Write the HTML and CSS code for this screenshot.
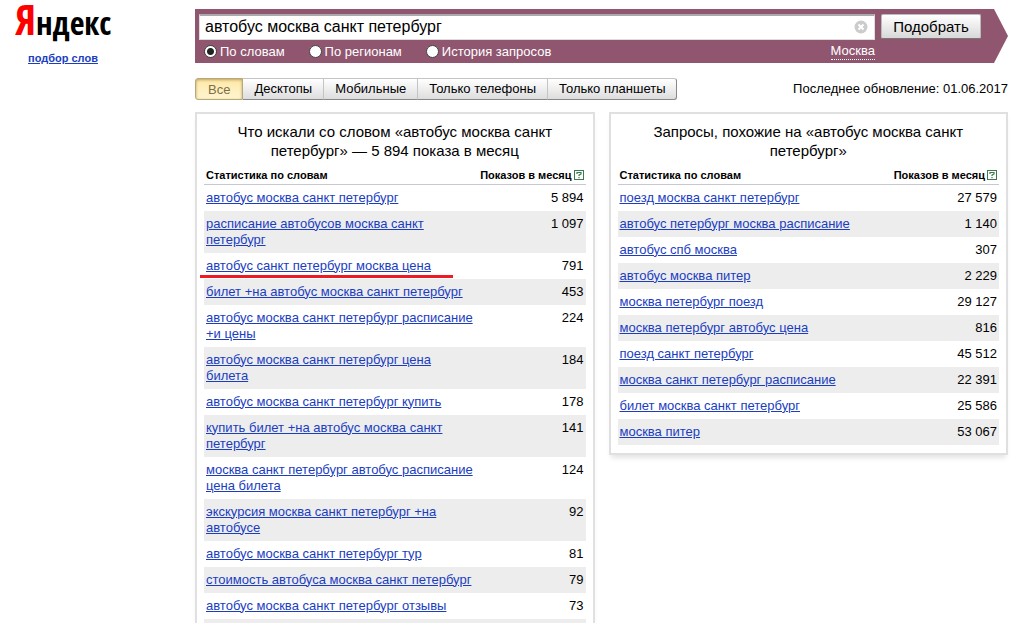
FILE: index.html
```html
<!DOCTYPE html>
<html lang="ru">
<head>
<meta charset="utf-8">
<title>Подбор слов</title>
<link rel="stylesheet" href="styles.css">
</head>
<body>
<div class="page">
  <aside class="brand">
    <div class="logo"><span class="logo-first">Я</span>ндекс</div>
    <a class="service" href="#">подбор слов</a>
  </aside>
  <main class="main">
    <form class="search">
      <div class="search-field">
        <div class="input-wrap">
          <input class="query" type="text" aria-label="Запрос" value="автобус москва санкт петербург">
          <button class="clear" type="button" aria-label="Очистить"><svg width="14" height="14" viewBox="0 0 14 14"><circle cx="7" cy="7" r="6.5" fill="#ccc"/><path d="M4.5 4.5l5 5M9.500 4.500l-5 5" stroke="#fff" stroke-width="2"/></svg></button>
        </div>
        <div class="options">
          <label class="option"><input type="radio" name="mode" checked>По словам</label>
          <label class="option"><input type="radio" name="mode">По регионам</label>
          <label class="option"><input type="radio" name="mode">История запросов</label>
          <a class="region" href="#">Москва</a>
        </div>
      </div>
      <button class="submit" type="button">Подобрать</button>
    </form>
    <div class="toolbar">
      <div class="tabs">
        <button class="tab tab-active" type="button">Все</button>
        <button class="tab" type="button">Десктопы</button>
        <button class="tab" type="button">Мобильные</button>
        <button class="tab" type="button">Только телефоны</button>
        <button class="tab" type="button">Только планшеты</button>
      </div>
      <span>Последнее обновление: 01.06.2017</span>
    </div>
    <div class="panels">
      <section class="panel">
        <h2 class="title">Что искали со словом «автобус москва санкт петербург» — 5 894 показа в месяц</h2>
        <table class="stats">
          <thead><tr><th class="words">Статистика по словам</th><th class="count">Показов в месяц<svg class="help" width="10" height="10" viewBox="0 0 10 10"><rect x=".5" y=".5" width="9" height="9" fill="#fff" stroke="#3a7a4c"/><path d="M3 4V2.500h4V4L5 5.200V6M5 7v1.200" fill="none" stroke="#3a7a4c" stroke-width="1.200"/></svg></th></tr></thead>
          <tbody>
            <tr><td><a href="#">автобус москва санкт петербург</a></td><td class="count">5 894</td></tr>
            <tr><td><a href="#">расписание автобусов москва санкт петербург</a></td><td class="count">1 097</td></tr>
            <tr><td class="marked"><a href="#">автобус санкт петербург москва цена</a></td><td class="count">791</td></tr>
            <tr><td><a href="#">билет +на автобус москва санкт петербург</a></td><td class="count">453</td></tr>
            <tr><td><a href="#">автобус москва санкт петербург расписание +и цены</a></td><td class="count">224</td></tr>
            <tr><td><a href="#">автобус москва санкт петербург цена билета</a></td><td class="count">184</td></tr>
            <tr><td><a href="#">автобус москва санкт петербург купить</a></td><td class="count">178</td></tr>
            <tr><td><a href="#">купить билет +на автобус москва санкт петербург</a></td><td class="count">141</td></tr>
            <tr><td><a href="#">москва санкт петербург автобус расписание цена билета</a></td><td class="count">124</td></tr>
            <tr><td><a href="#">экскурсия москва санкт петербург +на автобусе</a></td><td class="count">92</td></tr>
            <tr><td><a href="#">автобус москва санкт петербург тур</a></td><td class="count">81</td></tr>
            <tr><td><a href="#">стоимость автобуса москва санкт петербург</a></td><td class="count">79</td></tr>
            <tr><td><a href="#">автобус москва санкт петербург отзывы</a></td><td class="count">73</td></tr>
            <tr class="next"><td></td><td></td></tr>
          </tbody>
        </table>
      </section>
      <section class="panel">
        <h2 class="title">Запросы, похожие на «автобус москва санкт петербург»</h2>
        <table class="stats">
          <thead><tr><th class="words">Статистика по словам</th><th class="count">Показов в месяц<svg class="help" width="10" height="10" viewBox="0 0 10 10"><rect x=".5" y=".5" width="9" height="9" fill="#fff" stroke="#3a7a4c"/><path d="M3 4V2.500h4V4L5 5.200V6M5 7v1.200" fill="none" stroke="#3a7a4c" stroke-width="1.200"/></svg></th></tr></thead>
          <tbody>
            <tr><td><a href="#">поезд москва санкт петербург</a></td><td class="count">27 579</td></tr>
            <tr><td><a href="#">автобус петербург москва расписание</a></td><td class="count">1 140</td></tr>
            <tr><td><a href="#">автобус спб москва</a></td><td class="count">307</td></tr>
            <tr><td><a href="#">автобус москва питер</a></td><td class="count">2 229</td></tr>
            <tr><td><a href="#">москва петербург поезд</a></td><td class="count">29 127</td></tr>
            <tr><td><a href="#">москва петербург автобус цена</a></td><td class="count">816</td></tr>
            <tr><td><a href="#">поезд санкт петербург</a></td><td class="count">45 512</td></tr>
            <tr><td><a href="#">москва санкт петербург расписание</a></td><td class="count">22 391</td></tr>
            <tr><td><a href="#">билет москва санкт петербург</a></td><td class="count">25 586</td></tr>
            <tr><td><a href="#">москва питер</a></td><td class="count">53 067</td></tr>
          </tbody>
        </table>
      </section>
    </div>
  </main>
</div>
</body>
</html>
```
FILE: styles.css
```css
* { box-sizing: border-box; }
body {
  margin: 0;
  height: 100vh;
  overflow: hidden;
  background: #fff;
  color: #000;
  font: 13px/16px "Liberation Sans", Arial, sans-serif;
}
button, input { font-family: inherit; color: inherit; margin: 0; }
a { color: #1a3dc1; text-underline-offset: 1px; }

.page { display: grid; grid-template-columns: 195px 1fr; padding-right: 7px; }

.logo { padding-left: 15px; height: 48px; font: 32px/38px "Open Sans Condensed", "Liberation Sans Narrow", sans-serif; }
.logo-first { color: #f00; font-size: 42px; }
.service { display: inline-block; margin-left: 28px; font-size: 11px; line-height: 20px; font-weight: bold; }

.main { padding-top: 9px; }
.search {
  display: flex;
  align-items: flex-start;
  gap: 6px;
  height: 54px;
  padding: 5px 27px 0 4px;
  background: #90566f;
  clip-path: polygon(0 0, calc(100% - 14px) 0, 100% 50%, calc(100% - 14px) 100%, 0 100%);
}
.search-field { flex: 1; }
.input-wrap { position: relative; }
.query {
  display: block;
  width: 100%;
  height: 26px;
  padding: 0 28px 2px 5px;
  border: 1px solid #ddd;
  border-top: 2px solid #aaa;
  background: #fff;
  font-size: 16px;
}
.clear { position: absolute; right: 7px; top: 6px; padding: 0; border: 0; background: none; line-height: 0; }
.submit {
  width: 100px;
  height: 25px;
  padding: 0;
  border: 1px solid #bbb;
  border-bottom-color: #777;
  border-radius: 2px;
  background: linear-gradient(#fff, #d8d8d8);
  font-size: 15px;
}
.options { display: flex; gap: 24px; padding: 3px 0 0 5px; color: #fff; }
.option { display: flex; align-items: center; gap: 3px; height: 17px; }
.option input {
  appearance: none;
  width: 13px;
  height: 13px;
  border: 1px solid #444;
  border-radius: 50%;
  background: #fff;
}
.option input:checked { background: radial-gradient(circle, #222 3px, #fff 4px); }
.region { margin-left: auto; height: 17px; color: #fff; text-decoration: none; border-bottom: 1px dotted #fff; }

.toolbar { display: flex; justify-content: space-between; align-items: center; height: 22px; margin: 15px 0 12px; }
.tabs { display: flex; }
.tab {
  height: 22px;
  padding: 0 11px 1px;
  border: 1px solid #c4c4c4;
  border-left-width: 0;
  border-bottom-color: #888;
  background: linear-gradient(#fff, #ddd);
  font-size: 13px;
}
.tab:last-child { border-radius: 0 3px 3px 0; border-right-color: #888; }
.tab-active {
  padding: 0 12px;
  border: 1px solid #b8a878;
  border-radius: 3px 0 0 3px;
  background: linear-gradient(#ffe9a6, #fff5d2);
  box-shadow: inset 0 1px 3px #b8a060;
  color: #7c704b;
}

.panels { display: grid; grid-template-columns: 1fr 1fr; gap: 14px; align-items: start; }
.panel { padding: 8px 7px 8px; border: 2px solid #e0e0e0; box-shadow: 0 5px 5px -2px #e4e4e4; }
.title { margin: 0; padding: 0 24px; font-size: 15px; line-height: 19px; font-weight: normal; text-align: center; }
.stats { width: 100%; border-collapse: collapse; table-layout: fixed; }
th { padding: 7px 2px 0; height: 24px; border-bottom: 1px solid #c8c8d4; font-size: 11px; line-height: 16px; text-align: left; white-space: nowrap; }
td { padding: 5px 2px; vertical-align: top; }
.words { width: 71%; }
.count { text-align: right; }
.help { margin-left: 2px; vertical-align: -1px; }
tbody tr:nth-child(even) { background: #ededed; }
.marked { position: relative; }
.marked::after { content: ""; position: absolute; left: -4px; bottom: 1px; width: 253px; height: 3px; background: #ed1c24; }
.next { height: 26px; }
```
